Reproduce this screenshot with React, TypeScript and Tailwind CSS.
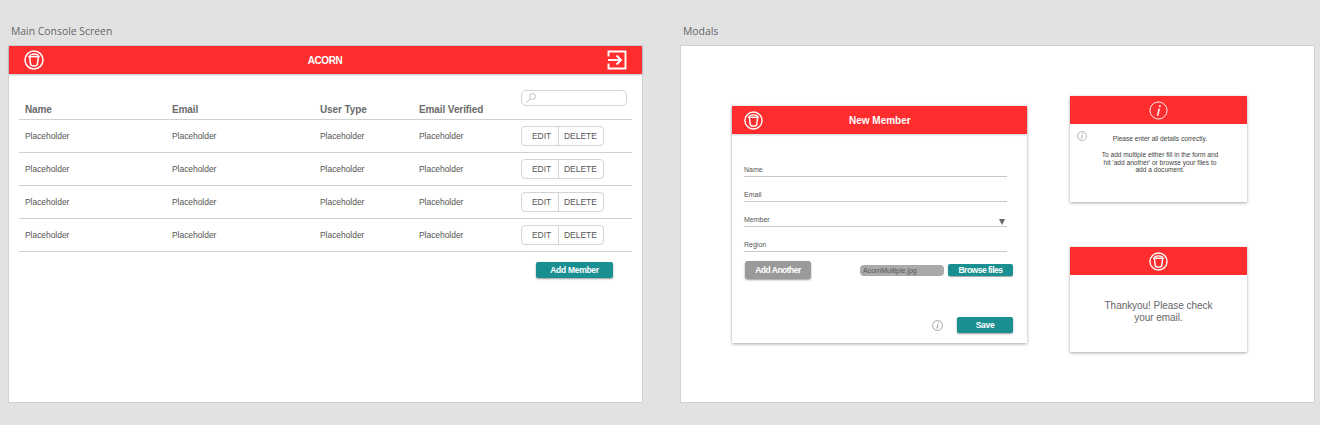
const CupIcon = ({ className }: { className: string }) => (
  <svg viewBox="0 0 20 20" fill="none" stroke="white" className={className}>
    <circle cx="10" cy="10" r="9" strokeWidth="1.5" />
    <path d="M4.2 6.6 H15.8" strokeWidth="1.5" />
    <path d="M5.6 6.4 C5.6 3.2 14.4 3.2 14.4 6.4" strokeWidth="1.3" />
    <path d="M5.6 6.8 L6.6 14.4 C6.9 16.4 13.1 16.4 13.4 14.4 L14.4 6.8" strokeWidth="1.5" />
  </svg>
);

const InfoIcon = ({ className, color, width }: { className: string; color: string; width: string }) => (
  <svg viewBox="0 0 20 20" fill="none" stroke={color} className={className}>
    <circle cx="10" cy="10" r="9" strokeWidth={width} />
    <path d="M11.6 4.6 L11.3 6.2" strokeWidth="2" />
    <path d="M10.8 8 L9 15.5" strokeWidth="1.6" />
  </svg>
);

const ExitIcon = () => (
  <svg viewBox="0 0 20 20" fill="none" stroke="white" strokeWidth="1.9" className="h-[20px] w-[20px]">
    <path d="M1.5 6.5 V1.5 H18.5 V18.5 H1.5 V13.5" />
    <path d="M1 10 H14" />
    <path d="M9.5 5.5 L14 10 L9.5 14.5" />
  </svg>
);

const rows = [0, 1, 2, 3];

const Row = () => (
  <div className="flex h-[33px] items-center border-b border-[#d0d0d0] pl-[6px] text-[8.5px] tracking-[-0.05px] text-[#555555]">
    <span className="w-[147px]">Placeholder</span>
    <span className="w-[148px]">Placeholder</span>
    <span className="w-[99px]">Placeholder</span>
    <span className="w-[102px]">Placeholder</span>
    <div className="flex h-[20px] w-[83px] items-center rounded-[4px] border border-[#d4d4d4] text-[8.5px] text-[#555555]">
      <span className="w-[37px] border-r border-[#d4d4d4] pl-[10px] leading-[18px]">EDIT</span>
      <span className="pl-[5px]">DELETE</span>
    </div>
  </div>
);

const Field = ({ label, arrow }: { label: string; arrow?: boolean }) => (
  <div className="flex h-[25px] items-end justify-between border-b border-[#c8c8c8] pb-[1px] text-[7px] text-[#555555]">
    <span>{label}</span>
    {arrow && <span className="mr-[2px] h-0 w-0 border-x-[3.5px] border-t-[6px] border-x-transparent border-t-[#666666]" />}
  </div>
);

export default function App() {
  return (
    <div className="flex h-[425px] w-[1320px] gap-[37px] overflow-hidden bg-[#e2e2e2] pl-[8px] font-['Liberation_Sans',sans-serif]">
      <section className="w-[635px]">
        <h2 className="flex h-[45px] items-start pl-[3px] pt-[23px] font-['Open_Sans',sans-serif] text-[10.4px] leading-[16px] text-[#666666]">
          Main Console Screen
        </h2>
        <div className="h-[358px] border border-[#d0d0d0] bg-white">
          <header className="flex h-[28px] items-center justify-between bg-[#ff2d2d] pl-[15px] pr-[15px] shadow-[0_1px_2px_rgba(0,0,0,0.25)]">
            <CupIcon className="h-[20px] w-[20px]" />
            <span className="mr-[1px] text-[10px] font-bold tracking-[-0.4px] text-white">ACORN</span>
            <ExitIcon />
          </header>
          <div className="mx-[10px] mt-[17px]">
            <div className="flex h-[29px] items-end border-b border-[#d0d0d0] pb-[2px] pl-[6px] text-[10px] font-bold tracking-[-0.1px] text-[#6b6b6b]">
              <span className="w-[147px]">Name</span>
              <span className="w-[148px]">Email</span>
              <span className="w-[99px]">User Type</span>
              <span className="w-[102px]">Email Verified</span>
              <div className="mb-[11px] flex h-[16px] w-[106px] items-center rounded-[5px] border border-[#d4d4d4] pl-[3px]">
                <svg viewBox="0 0 12 12" fill="none" stroke="#c4c4c4" className="h-[12px] w-[12px]">
                  <circle cx="7.5" cy="4.5" r="3" />
                  <path d="M5.3 6.7 L1 11" />
                </svg>
              </div>
            </div>
            {rows.map((row) => (
              <Row key={row} />
            ))}
            <div className="mt-[10px] flex justify-end pr-[19px]">
              <button className="h-[16px] w-[77px] rounded-[2px] bg-[#1a8f92] text-[8.5px] font-bold tracking-[-0.3px] text-white shadow-[0_1px_2px_rgba(0,0,0,0.4)]">
                Add Member
              </button>
            </div>
          </div>
        </div>
      </section>

      <section className="w-[635px]">
        <h2 className="flex h-[45px] items-start pl-[3px] pt-[23px] font-['Open_Sans',sans-serif] text-[10.4px] leading-[16px] text-[#666666]">
          Modals
        </h2>
        <div className="flex h-[358px] gap-[43px] border border-[#d0d0d0] bg-white pl-[51px]">
          <div className="mt-[60px] h-[237px] w-[295px] bg-white shadow-[0_1px_3px_rgba(0,0,0,0.35)]">
            <header className="flex h-[28px] items-center bg-[#ff2d2d] pl-[12px] shadow-[0_1px_2px_rgba(0,0,0,0.2)]">
              <CupIcon className="h-[19px] w-[19px]" />
              <span className="ml-[86px] text-[10px] font-bold text-white">New Member</span>
            </header>
            <div className="ml-[12px] mt-[18px] w-[263px]">
              <Field label="Name" />
              <Field label="Email" />
              <Field label="Member" arrow />
              <Field label="Region" />
            </div>
            <div className="ml-[13px] mt-[9px] flex items-center">
              <button className="h-[18px] w-[66px] rounded-[3px] bg-[#9a9a9a] text-[8.5px] font-bold tracking-[-0.5px] text-white shadow-[0_1px_2px_rgba(0,0,0,0.4)]">
                Add Another
              </button>
              <div className="ml-[49px] h-[11px] w-[84px] rounded-[4px] bg-[#aaaaaa] pl-[3px] text-[7px] leading-[11px] text-[#555555]">
                AcornMultiple.jpg
              </div>
              <button className="ml-[4px] h-[12px] w-[65px] rounded-[2px] bg-[#1a8f92] text-[8.5px] font-bold leading-[12px] tracking-[-0.5px] text-white shadow-[0_1px_1px_rgba(0,0,0,0.35)]">
                Browse files
              </button>
            </div>
            <div className="mt-[38px] flex items-center justify-end pr-[14px]">
              <InfoIcon className="h-[11px] w-[11px]" color="#777777" width="1.2" />
              <button className="ml-[14px] h-[16px] w-[56px] rounded-[2px] bg-[#1a8f92] text-[8.5px] font-bold tracking-[-0.3px] text-white shadow-[0_1px_2px_rgba(0,0,0,0.4)]">
                Save
              </button>
            </div>
          </div>

          <div className="mt-[50px] flex w-[177px] flex-col gap-[45px]">
            <div className="h-[106px] bg-white shadow-[0_1px_3px_rgba(0,0,0,0.35)]">
              <header className="flex h-[28px] items-center justify-center bg-[#ff2d2d]">
                <InfoIcon className="h-[19px] w-[19px]" color="white" width="1" />
              </header>
              <div className="flex pl-[7px] pt-[7px]">
                <InfoIcon className="h-[10px] w-[10px] shrink-0" color="#888888" width="1.2" />
                <div className="w-[146px] pt-[4px] text-center text-[6.6px] leading-[7.3px] text-[#444444]">
                  <p className="mb-[9px]">Please enter all details correctly.</p>
                  <p>
                    To add multiple either fill in the form and
                    <br />
                    hit 'add another' or browse your files to
                    <br />
                    add a document.
                  </p>
                </div>
              </div>
            </div>
            <div className="h-[105px] bg-white shadow-[0_1px_3px_rgba(0,0,0,0.35)]">
              <header className="flex h-[28px] items-center justify-center bg-[#ff2d2d]">
                <CupIcon className="h-[19px] w-[19px]" />
              </header>
              <p className="pt-[25px] text-center text-[10px] leading-[12px] tracking-[-0.05px] text-[#666666]">
                Thankyou! Please check
                <br />
                your email.
              </p>
            </div>
          </div>
        </div>
      </section>
    </div>
  );
}
